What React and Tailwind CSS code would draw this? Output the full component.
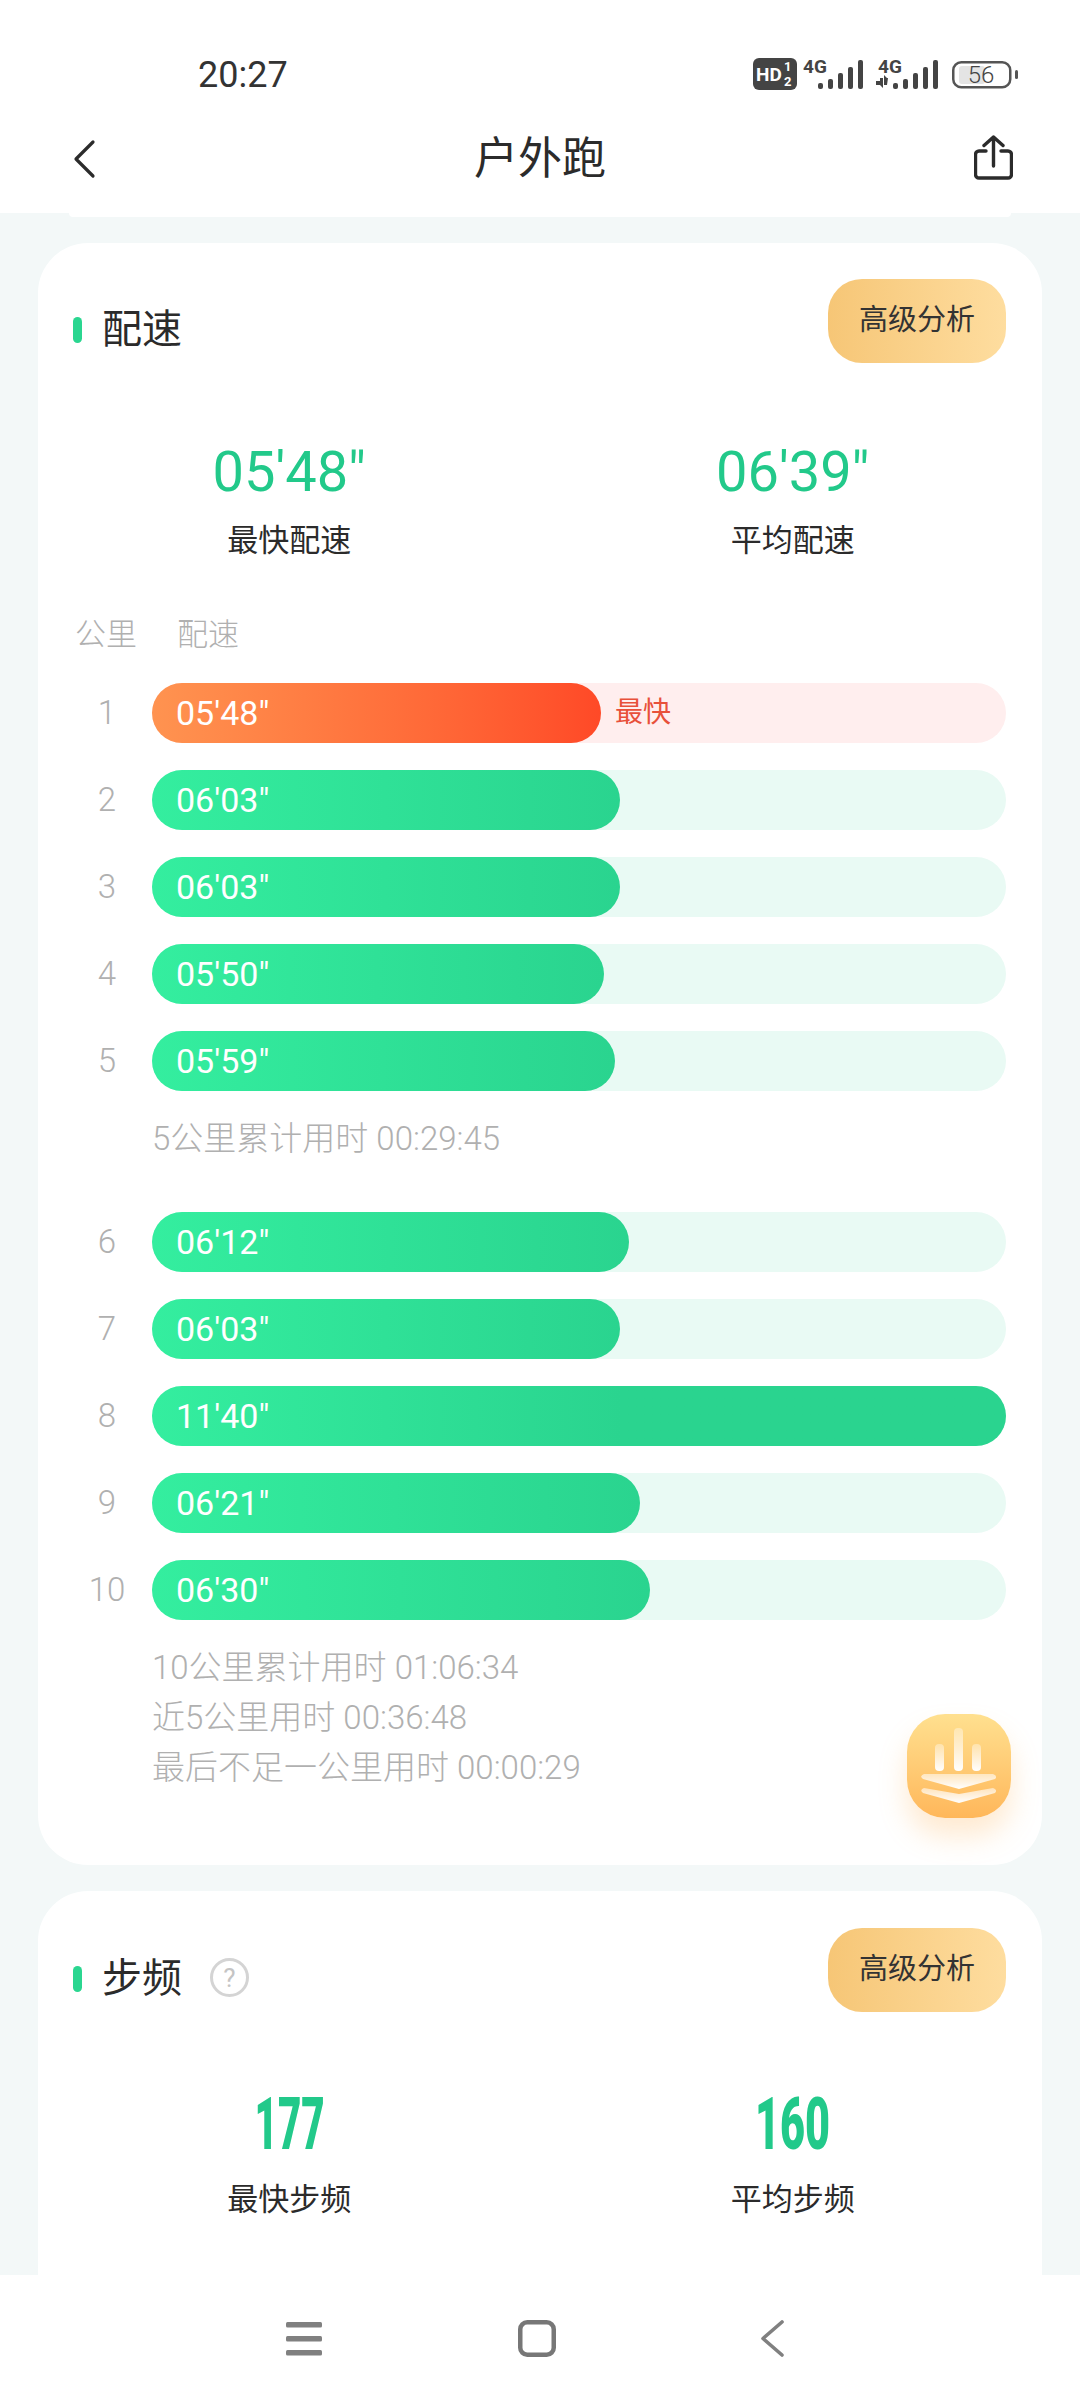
const firstLap = [
  { km: 1, pace: `05'48"`, width: 449, best: true },
  { km: 2, pace: `06'03"`, width: 468 },
  { km: 3, pace: `06'03"`, width: 468 },
  { km: 4, pace: `05'50"`, width: 452 },
  { km: 5, pace: `05'59"`, width: 463 },
]

const secondLap = [
  { km: 6, pace: `06'12"`, width: 477 },
  { km: 7, pace: `06'03"`, width: 468 },
  { km: 8, pace: `11'40"`, width: 854, wide: true },
  { km: 9, pace: `06'21"`, width: 488 },
  { km: 10, pace: `06'30"`, width: 498 },
]

function Signal({ roaming }) {
  const start = roaming ? 18 : 15
  const w = roaming ? 63 : 60
  const heights = [6, 10, 16, 22, 29]
  return (
    <svg width={w} height="40" viewBox={`0 -8 ${w} 40`} fill="#444">
      <text x={roaming ? 3 : 0} y="15" fontSize="19" fontWeight="700">4G</text>
      {roaming && (
        <path d="M1 23h4v-3l3 0v10l-3-3H1zM12 27H9V17l3 3h1z" />
      )}
      {heights.map((h, i) => (
        <rect key={i} x={start + i * 10} y={31 - h} width="5" height={h} rx="2" />
      ))}
    </svg>
  )
}

function StatusIcons() {
  return (
    <div className="mb-[10px] flex items-end">
      <svg width="44" height="40" viewBox="0 -8 44 40">
        <rect width="44" height="32" rx="6" fill="#444" />
        <text x="3" y="23" fontSize="19" fontWeight="700" fill="#fff">HD</text>
        <text x="31" y="13" fontSize="13" fontWeight="700" fill="#fff">1</text>
        <text x="31" y="28" fontSize="13" fontWeight="700" fill="#fff">2</text>
      </svg>
      <div className="ml-[6px] flex">
        <Signal />
      </div>
      <div className="ml-[12px] flex">
        <Signal roaming />
      </div>
      <svg className="ml-[14px]" width="66" height="40" viewBox="0 -8 66 40">
        <rect x="1.25" y="4.25" width="57" height="25" rx="8" fill="none" stroke="#555" strokeWidth="2.5" />
        <rect x="7" y="8" width="26" height="18" rx="3" fill="#e4e4e4" />
        <text x="29" y="25" fontSize="24" fontWeight="300" fill="#444" textAnchor="middle">56</text>
        <rect x="63" y="12" width="3" height="9" rx="1.5" fill="#555" />
      </svg>
    </div>
  )
}

function ShareIcon() {
  return (
    <svg className="mb-[3px]" width="39" height="45" viewBox="0 0 39 45" fill="none" stroke="#2b2b2b" strokeWidth="3.4" strokeLinecap="round" strokeLinejoin="round">
      <path d="M12 16H5a3.5 3.5 0 0 0-3.5 3.5v20A3.5 3.5 0 0 0 5 43h29a3.5 3.5 0 0 0 3.5-3.5v-20A3.5 3.5 0 0 0 34 16h-7" />
      <path d="M19.5 31V2M10 10.5 19.5 2 29 10.5" />
    </svg>
  )
}

function AnalysisButton() {
  return (
    <button className="flex h-[84px] w-[178px] items-center justify-center rounded-[34px] bg-gradient-to-r from-[#f6c676] to-[#fedd9f] text-[29px] text-[#333]">
      高级分析
    </button>
  )
}

function CardTitle({ children }) {
  return (
    <div className="mt-[23px] flex h-[56px] items-center">
      <span className="h-[26px] w-[9px] rounded-full bg-[#2ad690]" />
      <span className="ml-[20px] text-[40px] leading-none text-[#2b2b2b]">{children}</span>
    </div>
  )
}

function PaceRow({ km, pace, width, best, wide }) {
  return (
    <div className="flex items-center">
      <span className="w-[68px] text-center text-[33px] font-light text-[#b0b0b0]">{km}</span>
      <div className={`ml-[11px] flex h-[60px] flex-1 items-center rounded-full ${best ? 'bg-[#ffeeee]' : 'bg-[#e9faf4]'}`}>
        <div
          style={{ width }}
          className={`flex h-full items-center rounded-full pl-[24px] text-[34px] text-white ${best ? 'bg-gradient-to-r from-[#ff9350] to-[#ff4927]' : wide ? 'bg-gradient-to-r from-[#34ee9f] to-[#2ad48f] to-55%' : 'bg-gradient-to-r from-[#34ee9f] to-[#2ad48f]'}`}
        >
          {pace}
        </div>
        {best && <span className="ml-[14px] text-[28px] text-[#e8503a]">最快</span>}
      </div>
    </div>
  )
}

function Note({ children }) {
  return <p className="ml-[79px] text-[33px] leading-[50px] font-light text-[#b0b0b0]">{children}</p>
}

function FloatingBadge() {
  return (
    <div className="absolute right-[31px] bottom-[47px] size-[104px] rounded-[38px] bg-gradient-to-b from-[#ffe08f] to-[#ffb75a] shadow-[0_18px_28px_rgba(255,180,90,0.28)]">
      <svg width="104" height="104" viewBox="0 0 104 104">
        <defs>
          <linearGradient id="barFade" x1="0" y1="0" x2="0" y2="1">
            <stop offset="0" stopColor="#fff" stopOpacity="0.35" />
            <stop offset="1" stopColor="#fff" />
          </linearGradient>
          <linearGradient id="wingFade" x1="0" y1="0" x2="0" y2="1">
            <stop offset="0" stopColor="#fff" stopOpacity="0.55" />
            <stop offset="1" stopColor="#fff" />
          </linearGradient>
        </defs>
        <rect x="47" y="14" width="9" height="43" rx="4" fill="url(#barFade)" />
        <rect x="28" y="30" width="9" height="27" rx="4" fill="url(#barFade)" />
        <rect x="65" y="30" width="9" height="27" rx="4" fill="url(#barFade)" />
        <path d="M17 60 Q52 60 86 60 Q91 62 88 65 L52 75 L16 65 Q12 62 17 60Z" fill="url(#wingFade)" />
        <path d="M17 74 L52 80 L86 74 Q91 76 88 79 L52 89 L16 79 Q12 76 17 74Z" fill="url(#wingFade)" />
      </svg>
    </div>
  )
}

export default function App() {
  return (
    <div className="flex h-[2400px] w-[1080px] flex-col overflow-hidden bg-[#f3f8f8] font-['Roboto','Noto_Sans_CJK_SC',sans-serif] text-[#2b2b2b]">
      {/* status bar + title bar */}
      <div className="bg-white">
        <div className="flex h-[106px] items-center justify-between pt-[44px] pr-[62px] pl-[198px]">
          <span className="text-[36px] leading-none text-[#333]">20:27</span>
          <StatusIcons />
        </div>
        <div className="flex h-[107px] items-center justify-between pr-[67px] pl-[72px] pb-[2px]">
          <div className="w-[39px]">
            <svg className="block" width="24" height="40" viewBox="0 0 24 40" fill="none" stroke="#2b2b2b" strokeWidth="3.2" strokeLinecap="round" strokeLinejoin="round">
              <path d="M21 3 4 20l17 17" />
            </svg>
          </div>
          <h1 className="mr-[5px] text-[44px] leading-none font-normal">户外跑</h1>
          <ShareIcon />
        </div>
      </div>

      <div className="flex-1 overflow-hidden">
        <div className="mx-[69px] h-[4px] rounded-b-[8px] bg-white" />

        {/* 配速 */}
        <section className="relative mx-[38px] mt-[26px] h-[1622px] rounded-[50px] bg-white pt-[36px] pr-[36px] pl-[35px]">
          <div className="flex items-start justify-between">
            <CardTitle>配速</CardTitle>
            <AnalysisButton />
          </div>

          <div className="mt-[77px] grid grid-cols-2">
            <div className="flex flex-col items-center pr-[34px]">
              <span className="text-[56px] leading-[64px] text-[#22c98a]">05'48"</span>
              <span className="mt-[17px] text-[31px] leading-[40px]">最快配速</span>
            </div>
            <div className="flex flex-col items-center pl-[40px]">
              <span className="text-[56px] leading-[64px] text-[#22c98a]">06'39"</span>
              <span className="mt-[17px] text-[31px] leading-[40px]">平均配速</span>
            </div>
          </div>

          <div className="mt-[54px] flex text-[31px] leading-[40px] font-light text-[#b0b0b0]">
            <span className="ml-[2px]">公里</span>
            <span className="ml-[40px]">配速</span>
          </div>

          <div className="mt-[28px] flex flex-col gap-[27px]">
            {firstLap.map((row) => (
              <PaceRow key={row.km} {...row} />
            ))}
          </div>
          <div className="mt-[23px]">
            <Note>5公里累计用时 00:29:45</Note>
          </div>

          <div className="mt-[48px] flex flex-col gap-[27px]">
            {secondLap.map((row) => (
              <PaceRow key={row.km} {...row} />
            ))}
          </div>
          <div className="mt-[23px]">
            <Note>10公里累计用时 01:06:34</Note>
            <Note>近5公里用时 00:36:48</Note>
            <Note>最后不足一公里用时 00:00:29</Note>
          </div>

          <FloatingBadge />
        </section>

        {/* 步频 */}
        <section className="mx-[38px] mt-[26px] h-[500px] rounded-[50px] bg-white pt-[37px] pr-[36px] pl-[35px]">
          <div className="flex items-start justify-between">
            <div className="flex items-start">
              <CardTitle>步频</CardTitle>
              <span className="mt-[30px] ml-[28px] flex size-[39px] items-center justify-center rounded-full border-[3px] border-[#d4d4d4] text-[26px] leading-none text-[#c4c4c4]">?</span>
            </div>
            <AnalysisButton />
          </div>

          <div className="mt-[81px] grid grid-cols-2">
            <div className="flex flex-col items-center pr-[34px]">
              <span className="inline-block scale-x-[0.56] text-[72px] leading-[64px] font-black text-[#22c98a]">177</span>
              <span className="mt-[23px] text-[31px] leading-[40px]">最快步频</span>
            </div>
            <div className="flex flex-col items-center pl-[40px]">
              <span className="inline-block scale-x-[0.6] text-[72px] leading-[64px] font-black text-[#22c98a]">160</span>
              <span className="mt-[23px] text-[31px] leading-[40px]">平均步频</span>
            </div>
          </div>
        </section>
      </div>

      {/* system nav */}
      <nav className="flex h-[125px] items-start bg-white pt-[45px] pl-[286px]">
        <svg width="36" height="37" viewBox="0 0 36 37" fill="#808080">
          <rect y="2" width="36" height="5.5" rx="1.5" />
          <rect y="16" width="36" height="5.5" rx="1.5" />
          <rect y="30" width="36" height="5.5" rx="1.5" />
        </svg>
        <svg className="ml-[196px]" width="38" height="37" viewBox="0 0 38 37" fill="none" stroke="#777" strokeWidth="4.5">
          <rect x="2.25" y="2.25" width="33.5" height="32.5" rx="7" />
        </svg>
        <svg className="ml-[204px]" width="24" height="37" viewBox="0 0 24 37" fill="none" stroke="#808080" strokeWidth="3.6" strokeLinecap="round" strokeLinejoin="round">
          <path d="M22 2 3 18.5 22 35" />
        </svg>
      </nav>
    </div>
  )
}
